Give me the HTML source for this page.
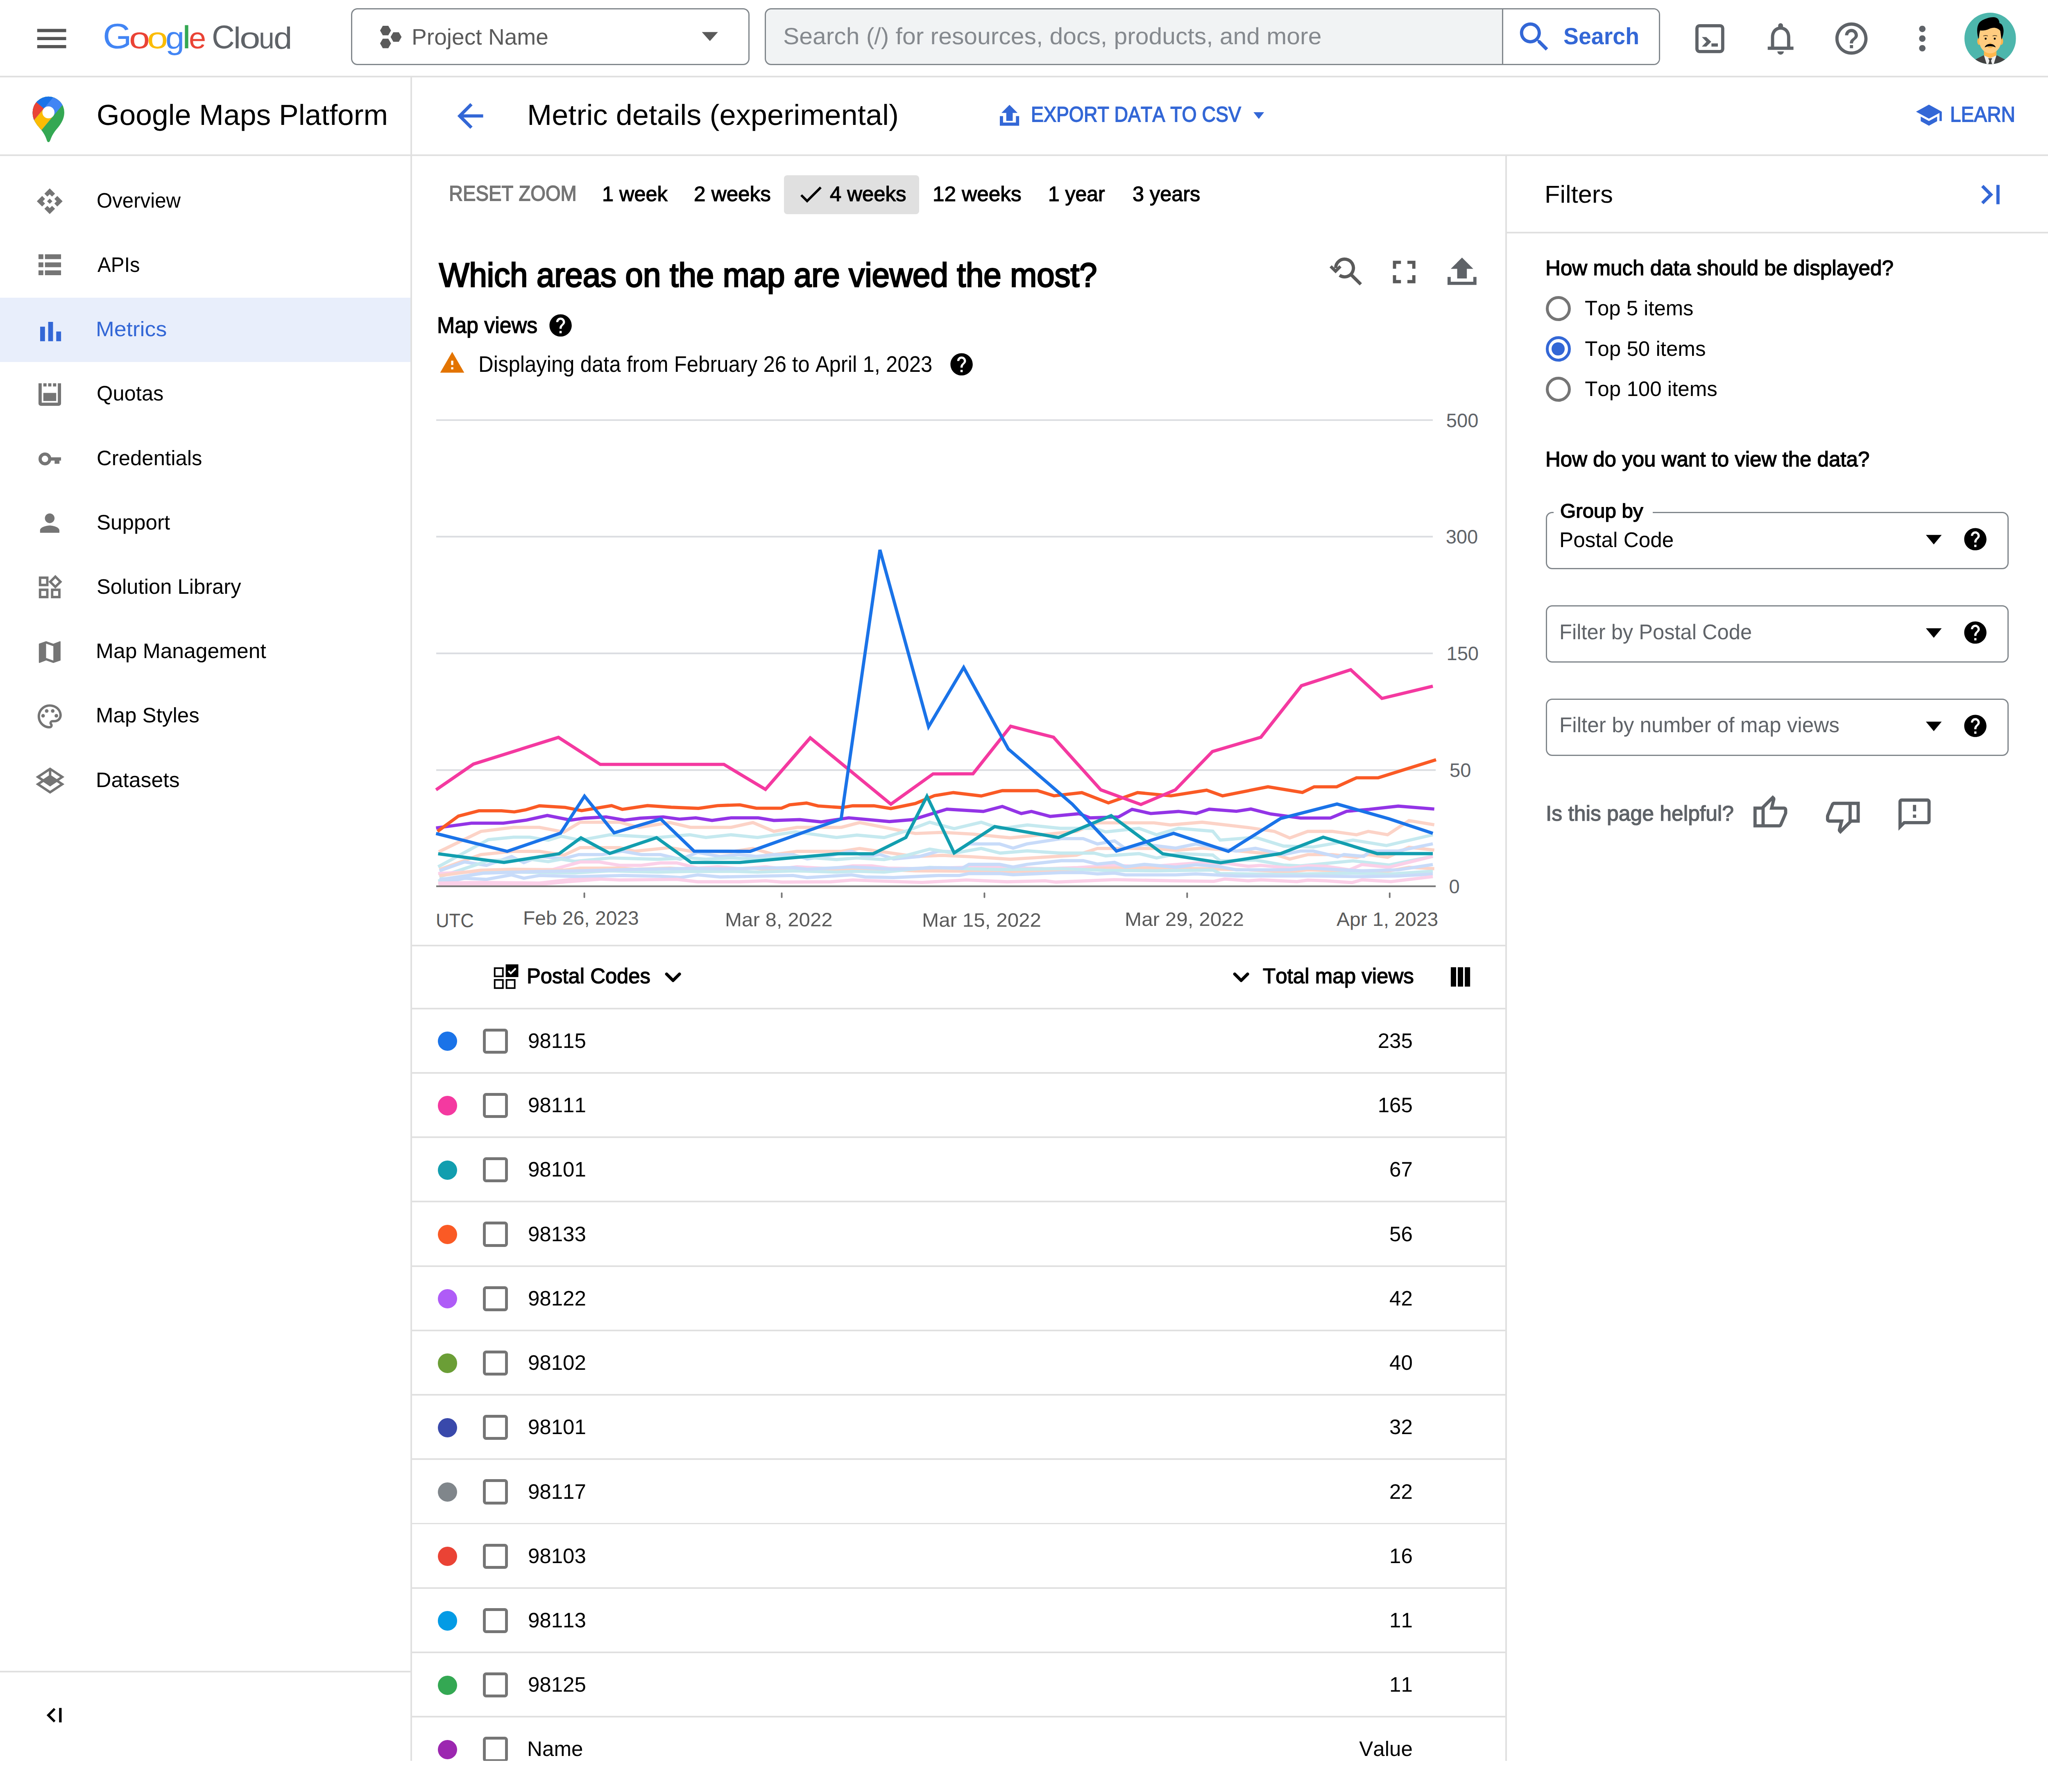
<!DOCTYPE html>
<html lang="en"><head><meta charset="utf-8"><title>Metric details – Google Maps Platform</title>
<style>
html,body{margin:0;padding:0;background:#fff}
body{width:5088px;height:4376px;overflow:hidden}
#app{position:relative;width:1272px;height:1094px;zoom:4;overflow:hidden;background:#fff;font-family:"Liberation Sans",sans-serif;text-rendering:geometricPrecision}
#app div,#app svg,#app span{position:absolute;box-sizing:content-box}
#app svg{overflow:visible}
#app header,#app nav,#app main,#app aside,#app .productbar,#app .logo{position:absolute;left:0;top:0;width:0;height:0}
.t{white-space:nowrap;line-height:1;transform-origin:0 0;font-kerning:none;font-variant-ligatures:none;letter-spacing:0}
</style></head>
<body><div id="app">
<header>
<div style="left:0px;top:47px;width:1272px;height:1px;background:#e0e0e0"></div>
<svg style="left:20px;top:12px;" width="24" height="24" viewBox="0 0 24 24"><path fill="#555" d="M3 18h18v-2H3v2zm0-5h18v-2H3v2zm0-7v2h18V6H3z"/></svg>
<span class="logo"><span class="t" style="left:63.78px;top:11.69px;font-size:21.96px;color:#4285f4;transform:scale(1.0561,1);">G</span><span class="t" style="left:80.26px;top:14.68px;font-size:18.47px;color:#ea4335;transform:scale(1.2659,1);">o</span><span class="t" style="left:91.42px;top:14.68px;font-size:18.47px;color:#fbbc04;transform:scale(1.2659,1);">o</span><span class="t" style="left:102.67px;top:14.35px;font-size:19.46px;color:#4285f4;transform:scale(1.0890,1);">g</span><span class="t" style="left:113.10px;top:13.13px;font-size:19.87px;color:#34a853;transform:scale(1.2082,1);">l</span><span class="t" style="left:117.40px;top:14.68px;font-size:18.47px;color:#ea4335;transform:scale(1.0442,1);">e</span></span>
<span class="logo"><span class="t" style="left:131.57px;top:12.99px;font-size:20.44px;color:#5f6368;transform:scale(0.9649,1);">C</span><span class="t" style="left:145.06px;top:14.22px;font-size:18.7px;color:#5f6368;transform:scale(1.1013,1);">l</span><span class="t" style="left:148.74px;top:14.68px;font-size:18.47px;color:#5f6368;transform:scale(1.2522,1);">o</span><span class="t" style="left:160.70px;top:14.74px;font-size:18.4px;color:#5f6368;transform:scale(0.9416,1);">u</span><span class="t" style="left:169.83px;top:14.18px;font-size:19.06px;color:#5f6368;transform:scale(1.0908,1);">d</span></span>
<div style="left:218px;top:5px;width:246px;height:34px;border:1px solid #80868b;border-radius:4px;"></div>
<svg style="left:234px;top:14px;" width="18" height="18" viewBox="234 14 18 18"><g fill="#5a5a5a"><polygon points="236.01,18.98 237.71,16.03 241.12,16.03 242.83,18.98 241.12,21.93 237.71,21.93"/><polygon points="242.54,22.98 244.24,20.03 247.66,20.03 249.36,22.98 247.66,25.93 244.24,25.93"/><polygon points="236.01,26.99 237.71,24.04 241.12,24.04 242.83,26.99 241.12,29.94 237.71,29.94"/></g></svg>
<span class="t" style="left:255.75px;top:15.95px;font-size:14px;color:#5a5a5a;transform:scale(1.0020,1);">Project Name</span>
<svg style="left:429px;top:10px;" width="24" height="24" viewBox="0 0 24 24"><path fill="#5a5a5a" d="M7 10l5 5.6 5-5.6z"/></svg>
<div style="left:475px;top:5px;width:554.5px;height:34px;border:1px solid #80868b;border-radius:4px;background:#f1f3f4;overflow:hidden;"><div style="left:457px;top:0;width:1px;height:34px;background:#80868b"></div><div style="left:458px;top:0;width:97px;height:34px;background:#fff"></div></div>
<span class="t" style="left:486.52px;top:15.44px;font-size:14.6px;color:#85898e;transform:scale(1.0253,1);">Search (/) for resources, docs, products, and more</span>
<svg style="left:941px;top:11px;" width="24" height="24" viewBox="0 0 24 24"><path fill="#3367d6" d="M15.5 14h-.79l-.28-.27C15.41 12.59 16 11.11 16 9.5 16 5.91 13.09 3 9.5 3S3 5.91 3 9.5 5.91 16 9.5 16c1.61 0 3.09-.59 4.23-1.57l.27.28v.79l5 4.99L20.49 19l-4.99-5zm-6 0C7.01 14 5 11.99 5 9.5S7.01 5 9.5 5 14 7.01 14 9.5 11.99 14 9.5 14z"/></svg>
<span class="t" style="left:970.99px;top:15.44px;font-size:14.6px;color:#3367d6;font-weight:700;transform:scale(0.9668,1);">Search</span>
<svg style="left:1053px;top:15px;" width="18" height="18" viewBox="0 0 18 18"><rect x="1" y="1" width="16" height="16" rx="1.6" fill="none" stroke="#5f6368" stroke-width="2"/><path fill="#5f6368" d="M4.05 8h2.75l3.1 2.95L6.8 13.9H4.05l2.85-2.95zM10 11.95h4v2h-4z"/></svg>
<svg style="left:1094px;top:12px;" width="24" height="24" viewBox="0 0 24 24"><path fill="#5f6368" d="M4 19v-2h2v-6c0-3.07 1.63-5.64 4.5-6.32V4c0-.83.67-1.5 1.5-1.5s1.5.67 1.5 1.5v.68c2.86.68 4.5 3.24 4.5 6.32v6h2v2H4zm4-2h8v-6c0-2.48-1.51-4.5-4-4.500S8 8.520 8 11v6zM12 22c1.100 0 2-.9 2-2h-4c0 1.100.9 2 2 2z"/></svg>
<svg style="left:1138px;top:12px;" width="24" height="24" viewBox="0 0 24 24"><path fill="#5f6368" d="M11 18h2v-2h-2v2zm1-16C6.48 2 2 6.48 2 12s4.48 10 10 10 10-4.48 10-10S17.52 2 12 2zm0 18c-4.41 0-8-3.59-8-8s3.59-8 8-8 8 3.59 8 8-3.59 8-8 8zm0-14c-2.21 0-4 1.79-4 4h2c0-1.1.9-2 2-2s2 .9 2 2c0 2-3 1.75-3 5h2c0-2.25 3-2.5 3-5 0-2.21-1.79-4-4-4z"/></svg>
<svg style="left:1182px;top:12px;" width="24" height="24" viewBox="0 0 24 24"><path fill="#5f6368" d="M12 8c1.1 0 2-.9 2-2s-.9-2-2-2-2 .9-2 2 .9 2 2 2zm0 2c-1.1 0-2 .9-2 2s.9 2 2 2 2-.9 2-2-.9-2-2-2zm0 6c-1.1 0-2 .9-2 2s.9 2 2 2 2-.9 2-2-.9-2-2-2z"/></svg>
<svg style="left:1220px;top:8px;" width="32" height="32" viewBox="0 0 128 128"><defs><clipPath id="avc"><circle cx="64" cy="64" r="64"/></clipPath></defs><g clip-path="url(#avc)"><rect width="128" height="128" fill="#4db6ac"/><path fill="#424242" d="M20 120L47 106h34l27 14v12H20z"/><path fill="#eeeeee" d="M48.5 106L56 130h16l7.5-24z"/><path fill="#424242" d="M59 113.3h10l-3 6 3.4 10.7h-10.8l3.4-10.7z"/><path fill="#ffb74d" d="M48.5 90h31v16l-15.5 7.3-15.5-7.3z"/><ellipse cx="36.5" cy="71" rx="4.7" ry="9" fill="#ffb74d"/><ellipse cx="91.5" cy="71" rx="4.7" ry="9" fill="#ffb74d"/><path fill="#ffcc80" d="M37 30h54v40c0 18-13 31-27 31S37 88 37 70z"/><path fill="#000" d="M35 66c-4-14-5-28 0-38 4-8 14-12 24-15 10-3 22-3 26 5 2 4 2 7 2 8 6 1 9 8 10 16 1 9-2 18-5 25-1-8-2-15-3-22-8-9-18-9-27-5-8 4-16 5-23 4-2 7-3 14-4 22z"/><path d="M47 58q5.5-3 11 0M70 58q5.5-3 11 0" fill="none" stroke="#000" stroke-width="1.3"/><circle cx="52.7" cy="64.6" r="2.5"/><circle cx="75.3" cy="64.6" r="2.5"/><path fill="#ffa726" d="M60 75h8l-4 2.2z"/><path fill="#ffa726" d="M57 85.5h14q-7 4.5-14 0z"/><path fill="#000" d="M50.3 86.300c1.500-5.300 7.500-8.600 13.700-8.600s12.200 3.300 13.700 8.600c-4-2.300-9-2.900-13.700-2.900s-9.700.6-13.700 2.900z"/></g></svg>
</header>
<div class="productbar">
<div style="left:0px;top:96px;width:1272px;height:1px;background:#e0e0e0"></div>
<div style="left:255px;top:48px;width:1px;height:1046px;background:#e0e0e0"></div>
<div style="left:935px;top:97px;width:1px;height:997px;background:#e0e0e0"></div>
<svg style="left:18px;top:58px;" width="24" height="32" viewBox="18 58 24 32"><defs><clipPath id="pinc"><path d="M30.03 59.96A9.84 9.84 0 0 0 20.19 69.8C20.19 71.7 20.6 73.4 21.1 74.47 22.4 77.3 24.2 79 25.63 80.78 27 82.6 28 84.3 28.68 86.15 29.05 87.2 29.3 88.3 30.03 88.3 30.76 88.3 31 87.4 31.21 86.99 31.8 85.3 32.6 83.6 33.94 81.73 35.2 80 36.4 78.8 37.1 77.73 38.6 75.5 39.87 73 39.87 69.8A9.84 9.84 0 0 0 30.03 59.96z"/></clipPath></defs><g clip-path="url(#pinc)"><g transform="translate(30.03 69.8) rotate(-50)"><rect x="-25" y="-25" width="50" height="50" fill="#34a853"/><rect x="-25" y="-25" width="50" height="21.35" fill="#1a73e8"/><rect x="-25" y="-25" width="25" height="21.35" fill="#ea4335"/><rect x="-25" y="-3.75" width="50" height="7.5" fill="#4285f4"/><rect x="-25" y="-3.75" width="25" height="7.5" fill="#fbbc04"/></g></g><circle cx="30.03" cy="69.8" r="3.75" fill="#fff"/></svg>
<span class="t" style="left:59.99px;top:62.66px;font-size:18px;color:#000;transform:scale(1.0103,1);">Google Maps Platform</span>
<svg style="left:280px;top:60px;" width="24" height="24" viewBox="0 0 24 24"><path fill="#3367d6" d="M20 11H7.83l5.59-5.59L12 4l-8 8 8 8 1.41-1.41L7.83 13H20v-2z"/></svg>
<span class="t" style="left:327.39px;top:62.66px;font-size:18px;color:#000;transform:scale(1.0207,1);">Metric details (experimental)</span>
<svg style="left:621px;top:65px;" width="12" height="13" viewBox="0 0 12 13"><path fill="#3367d6" d="M6 0l5 5H8v5H4V5H1zM0 7h2v4h8V7h2v6H0z"/></svg>
<span class="t" style="left:640.43px;top:64.69px;font-size:13.3px;color:#3367d6;-webkit-text-stroke:0.45px #3367d6;transform:scale(0.8875,1);">EXPORT DATA TO CSV</span>
<svg style="left:777px;top:68px;" width="10" height="8" viewBox="0 0 10 8"><path fill="#3367d6" d="M1.6 1.8h6.6l-3.3 4.2z"/></svg>
<svg style="left:1189.4px;top:62.9px;" width="17.45" height="17.45" viewBox="0 0 24 24"><path fill="#3367d6" d="M5 13.18v4L12 21l7-3.82v-4L12 17l-7-3.82zM12 3L1 9l11 6 9-4.91V17h2V9L12 3z"/></svg>
<span class="t" style="left:1211.31px;top:64.69px;font-size:13.3px;color:#3367d6;-webkit-text-stroke:0.45px #3367d6;transform:scale(0.9127,1);">LEARN</span>
</div>
<nav>
<div style="left:0px;top:185px;width:255px;height:40px;background:#e8eefb"></div>
<span class="t" style="left:60.01px;top:117.94px;font-size:13px;color:#000;transform:scale(0.9628,1);">Overview</span>
<span class="t" style="left:60.58px;top:157.94px;font-size:13px;color:#000;transform:scale(0.9607,1);">APIs</span>
<span class="t" style="left:59.48px;top:197.94px;font-size:13px;color:#3367d6;transform:scale(1.0532,1);">Metrics</span>
<span class="t" style="left:59.99px;top:237.94px;font-size:13px;color:#000;transform:scale(0.9920,1);">Quotas</span>
<span class="t" style="left:59.94px;top:277.94px;font-size:13px;color:#000;transform:scale(0.9965,1);">Credentials</span>
<span class="t" style="left:60.01px;top:317.94px;font-size:13px;color:#000;transform:scale(1.0012,1);">Support</span>
<span class="t" style="left:60.01px;top:357.94px;font-size:13px;color:#000;transform:scale(0.9932,1);">Solution Library</span>
<span class="t" style="left:59.52px;top:397.94px;font-size:13px;color:#000;transform:scale(1.0095,1);">Map Management</span>
<span class="t" style="left:59.53px;top:437.94px;font-size:13px;color:#000;">Map Styles</span>
<span class="t" style="left:59.52px;top:477.94px;font-size:13px;color:#000;transform:scale(1.0148,1);">Datasets</span>
<svg style="left:22px;top:116px;" width="18" height="18" viewBox="0 0 18 18"><g fill="#757575" transform="translate(9,9)"><path transform="rotate(0)" d="M0-8L3.3-4.7 1.45-2.9 0-4.3-1.45-2.9-3.3-4.7z"/><path transform="rotate(90)" d="M0-8L3.3-4.7 1.45-2.9 0-4.3-1.45-2.9-3.3-4.7z"/><path transform="rotate(180)" d="M0-8L3.3-4.7 1.45-2.9 0-4.3-1.45-2.9-3.3-4.7z"/><path transform="rotate(270)" d="M0-8L3.3-4.7 1.45-2.9 0-4.3-1.45-2.9-3.3-4.7z"/><path d="M0-1.65L1.65 0 0 1.65-1.65 0z"/></g></svg>
<svg style="left:24px;top:158px;" width="14" height="13" viewBox="0 0 14 13"><path fill="#757575" d="M0 0h3v3H0zM4 0h10v3H4zM0 5h3v3H0zM4 5h10v3H4zM0 10h3v3H0zM4 10h10v3H4z"/></svg>
<svg style="left:25px;top:200px;" width="13" height="12" viewBox="0 0 13 12"><path fill="#3367d6" d="M0 3h3v9H0zM5 0h3v12H5zM10 6h3v6h-3z"/></svg>
<svg style="left:24px;top:238px;" width="14" height="14" viewBox="0 0 14 14"><path fill="#757575" d="M0 0h2v12h10V0h2v12.5a1.5 1.5 0 0 1-1.5 1.5h-11A1.5 1.5 0 0 1 0 12.5zM3 0h2v2H3zM6 0h2v2H6zM9 0h2v2H9zM3 6h8v5H3z"/></svg>
<svg style="left:24px;top:281px;" width="14" height="8" viewBox="0 0 14 8"><path fill="#757575" fill-rule="evenodd" d="M4 0a4 4 0 1 0 0 8 4 4 0 0 0 3.870-3H10v2h3V5h1V3H7.870A4 4 0 0 0 4 0zm0 2a2 2 0 1 1 0 4 2 2 0 0 1 0-4z"/></svg>
<svg style="left:22px;top:316px;" width="18" height="18" viewBox="0 0 24 24"><path fill="#757575" d="M12 12c2.21 0 4-1.79 4-4s-1.79-4-4-4-4 1.79-4 4 1.79 4 4 4zm0 2c-2.67 0-8 1.34-8 4v2h16v-2c0-2.66-5.33-4-8-4z"/></svg>
<svg style="left:22px;top:356px;" width="18" height="18" viewBox="0 0 24 24"><path fill="#757575" d="M16.66 4.52l2.83 2.83-2.83 2.83-2.83-2.83 2.83-2.83M9 5v4H5V5h4m10 10v4h-4v-4h4M9 15v4H5v-4h4m7.66-13.31L11 7.34 16.66 13l5.66-5.66-5.66-5.65zM11 3H3v8h8V3zm10 10h-8v8h8v-8zm-10 0H3v8h8v-8z"/></svg>
<svg style="left:22px;top:396px;" width="18" height="18" viewBox="0 0 24 24"><path fill="#757575" d="M20.5 3l-.16.03L15 5.1 9 3 3.36 4.9c-.21.07-.36.25-.36.48V20.5c0 .28.22.5.5.5l.16-.03L9 18.9l6 2.1 5.64-1.9c.21-.07.36-.25.36-.48V3.5c0-.28-.22-.5-.5-.5zM15 19l-6-2.11V5l6 2.11V19z"/></svg>
<svg style="left:22px;top:436px;" width="18" height="18" viewBox="0 0 24 24"><path fill="#757575" d="M12 22C6.49 22 2 17.51 2 12S6.49 2 12 2s10 4.04 10 9c0 3.31-2.69 6-6 6h-1.77c-.28 0-.5.22-.5.5 0 .12.05.23.13.33.41.47.64 1.06.64 1.67A2.5 2.5 0 0 1 12 22zm0-18c-4.41 0-8 3.59-8 8s3.59 8 8 8c.28 0 .5-.22.5-.5a.54.54 0 0 0-.14-.35c-.41-.46-.63-1.05-.63-1.65a2.5 2.5 0 0 1 2.5-2.5H16c2.21 0 4-1.79 4-4 0-3.86-3.59-7-8-7z"/><g fill="#757575"><circle cx="6.5" cy="11.5" r="1.5"/><circle cx="9.5" cy="7.5" r="1.5"/><circle cx="14.5" cy="7.5" r="1.5"/><circle cx="17.5" cy="11.5" r="1.5"/></g></svg>
<svg style="left:21px;top:475px;" width="20" height="20" viewBox="0 0 20 20"><g fill="none" stroke="#757575" stroke-width="1.5" stroke-linejoin="miter"><path d="M10 2.7l7.55 5-7.55 5-7.55-5z"/><path d="M10 7.2l7.55 5-7.55 5-7.55-5z"/><path d="M10 2.7v5"/></g><path fill="#757575" d="M10 6.6l4.6 3.1-4.6 3.9-4.6-3.9z"/></svg>
<div style="left:0px;top:1038px;width:255px;height:1px;background:#e0e0e0"></div>
<svg style="left:25.25px;top:1056.5px;" width="18" height="18" viewBox="0 0 24 24"><path fill="#000" d="M12.41 16.59L7.82 12l4.59-4.59L11 6l-6 6 6 6zM15.35 6h2.1v12h-2.100z"/></svg>
</nav>
<main>
<div style="left:487px;top:109px;width:84px;height:24px;background:#e0e0e0;border-radius:2px"></div>
<span class="t" style="left:278.82px;top:113.84px;font-size:13.3px;color:#757575;-webkit-text-stroke:0.45px #757575;transform:scale(0.9026,1);">RESET ZOOM</span>
<span class="t" style="left:373.90px;top:113.89px;font-size:13px;color:#000;-webkit-text-stroke:0.35px #000;transform:scale(0.9860,1);">1 week</span>
<span class="t" style="left:430.92px;top:113.89px;font-size:13px;color:#000;-webkit-text-stroke:0.35px #000;transform:scale(1.0018,1);">2 weeks</span>
<span class="t" style="left:515.38px;top:113.89px;font-size:13px;color:#000;-webkit-text-stroke:0.35px #000;transform:scale(0.9942,1);">4 weeks</span>
<span class="t" style="left:579.28px;top:113.89px;font-size:13px;color:#000;-webkit-text-stroke:0.35px #000;transform:scale(1.0035,1);">12 weeks</span>
<span class="t" style="left:650.90px;top:113.89px;font-size:13px;color:#000;-webkit-text-stroke:0.35px #000;transform:scale(0.9752,1);">1 year</span>
<span class="t" style="left:703.38px;top:113.89px;font-size:13px;color:#000;-webkit-text-stroke:0.35px #000;transform:scale(0.9853,1);">3 years</span>
<svg style="left:494.46px;top:111.8px;" width="18" height="18" viewBox="0 0 24 24"><path fill="#000" d="M9 16.17L4.83 12l-1.42 1.41L9 19 21 7l-1.41-1.41z"/></svg>
<!-- chart header -->
<span class="t" style="left:272.69px;top:160.42px;font-size:21.0px;color:#000;-webkit-text-stroke:0.8px #000;transform:scale(0.9439,1);">Which areas on the map are viewed the most?</span>
<span class="t" style="left:271.51px;top:195.05px;font-size:14px;color:#000;-webkit-text-stroke:0.4px #000;transform:scale(0.9433,1);">Map views</span>
<svg style="left:339.9px;top:193.9px;" width="16.6" height="16.6" viewBox="0 0 24 24"><path fill="#000" d="M12 2C6.48 2 2 6.48 2 12s4.48 10 10 10 10-4.48 10-10S17.52 2 12 2zm1 17h-2v-2h2v2zm2.07-7.75l-.9.92C13.45 12.9 13 13.5 13 15h-2v-.5c0-1.1.45-2.1 1.17-2.83l1.24-1.26c.37-.36.59-.86.59-1.41 0-1.1-.9-2-2-2s-2 .9-2 2H8c0-2.21 1.79-4 4-4s4 1.79 4 4c0 .88-.36 1.68-.93 2.25z"/></svg>
<svg style="left:272.8px;top:217.2px;" width="16.3" height="16.3" viewBox="0 0 24 24"><path fill="#e37400" d="M1 21h22L12 2 1 21zm12-3h-2v-2h2v2zm0-4h-2v-4h2v4z"/></svg>
<span class="t" style="left:297.14px;top:219.35px;font-size:14px;color:#000;transform:scale(0.9245,1);">Displaying data from February 26 to April 1, 2023</span>
<svg style="left:588.9px;top:217.9px;" width="16.6" height="16.6" viewBox="0 0 24 24"><path fill="#000" d="M12 2C6.48 2 2 6.48 2 12s4.48 10 10 10 10-4.48 10-10S17.52 2 12 2zm1 17h-2v-2h2v2zm2.07-7.75l-.9.92C13.45 12.9 13 13.5 13 15h-2v-.5c0-1.1.45-2.1 1.17-2.83l1.24-1.26c.37-.36.59-.86.59-1.41 0-1.1-.9-2-2-2s-2 .9-2 2H8c0-2.21 1.79-4 4-4s4 1.79 4 4c0 .88-.36 1.68-.93 2.25z"/></svg>
<svg style="left:824px;top:158px;" width="24" height="22" viewBox="824 158 24 22"><g fill="none" stroke="#5a5a5a" stroke-width="2"><path d="M829.6 166.6A5.5 5.5 0 1 1 832.0 171.05"/><path d="M839.2 170.7l6.0 5.95"/><path d="M826.45 165.45l3.07 3.05 3.0-3.05" stroke-width="1.9"/></g></svg>
<svg style="left:860px;top:157px;" width="24" height="24" viewBox="0 0 24 24"><path fill="#5a5a5a" d="M7 14H5v5h5v-2H7v-3zm-2-4h2V7h3V5H5v5zm12 7h-3v2h5v-5h-2v3zM14 5v2h3v3h2V5h-5z"/></svg>
<svg style="left:899px;top:160px;" width="18" height="17" viewBox="0 0 18 17"><path fill="#5f6368" d="M9 0l7 7h-4v6H6V7H2zM0 12h2v3h14v-3h2v5H0z"/></svg>
<!-- chart -->
<svg style="left:256px;top:245px" width="680" height="345" viewBox="256 245 680 345"><g stroke="#dadce0" stroke-width="1"><line x1="271" y1="261" x2="890" y2="261"/><line x1="271" y1="333.4" x2="890" y2="333.4"/><line x1="271" y1="405.9" x2="890" y2="405.9"/><line x1="271" y1="478.4" x2="891.8" y2="478.4"/></g><g fill="none" stroke-linejoin="miter" stroke-linecap="butt"><polyline points="272.6,529.2 298.8,516.5 319.0,514.0 335.1,514.0 350.3,516.9 360.4,510.8 384.9,510.8 396.8,514.0 416.2,511.0 428.9,514.0 454.1,514.0 467.7,511.0 480.7,516.5 495.1,514.0 522.6,514.0 534.0,511.0 568.6,517.8 585.5,517.1 604.4,518.2 627.7,520.5 668.6,516.5 681.7,511.2 716.8,511.2 726.9,512.5 746.7,510.8 775.3,514.1 791.6,516.5 801.1,520.6 812.3,516.5 827.5,516.5 842.6,518.6 849.9,516.5 861.9,518.6 875.2,509.8 890.9,512.4" stroke="#fcd3c7" stroke-width="2"/><polyline points="272.2,538.5 303.4,521.6 319.0,520.1 329.2,520.1 340.6,522.0 348.6,519.5 360.4,522.0 379.0,518.6 408.6,520.3 428.4,518.6 438.5,520.3 454.1,518.6 470.6,520.3 494.3,516.8 519.6,520.3 532.3,518.8 549.2,520.3 563.5,516.1 577.5,510.8 592.7,514.8 609.5,510.8 621.3,514.8 638.2,512.5 658.5,514.6 679.6,514.6 686.8,516.8 707.5,514.6 718.4,518.6 732.0,514.6 753.3,516.4 757.9,521.9 779.8,520.2 797.2,525.6 815.7,526.2 840.4,521.9 861.2,525.3 890.0,518.6" stroke="#c5e9ef" stroke-width="2"/><polyline points="273.0,540.2 298.8,530.9 319.0,528.9 335.1,528.9 350.3,531.3 360.4,526.6 384.9,526.6 394.2,528.8 416.2,526.6 428.9,528.8 454.1,529.2 467.7,527.1 480.7,530.9 495.1,528.9 522.6,528.9 534.0,527.1 568.6,532.1 585.5,531.4 604.4,532.3 627.7,533.8 668.6,531.3 681.7,527.1 716.8,527.1 730.3,528.3 746.7,526.9 775.3,529.2 791.6,530.7 801.1,533.7 812.3,530.9 827.5,530.9 842.6,532.6 849.9,530.9 861.9,532.6 875.2,526.4 890.9,528.1" stroke="#fcd3c7" stroke-width="2"/><polyline points="273.0,541.0 288.6,535.5 302.2,537.6 317.8,532.1 325.4,535.9 335.1,532.1 350.3,533.4 359.6,530.9 374.0,530.9 386.6,528.8 398.4,530.9 410.3,530.9 422.5,533.8 433.4,529.6 447.4,532.1 458.8,530.9 469.8,532.1 480.7,530.9 492.6,530.9 501.4,533.6 517.1,531.3 528.9,528.8 537.3,532.1 546.6,530.9 555.1,533.6 571.1,532.1 582.9,528.8 593.4,529.2 601.9,524.3 620.9,524.3 629.3,526.9 637.8,524.3 659.3,521.0 672.8,521.0 681.7,524.3 692.3,522.4 699.0,527.1 710.8,524.5 730.3,526.9 742.9,524.3 768.0,528.7 779.8,527.0 797.2,530.9 807.8,528.7 815.7,528.7 830.9,532.3 834.8,530.9 847.1,532.0 851.1,528.7 868.5,528.7 890.0,524.2" stroke="#c8dbf9" stroke-width="2"/><polyline points="273.0,544.8 303.4,534.7 329.2,533.8 340.6,535.3 348.6,533.8 357.1,535.1 379.0,533.0 408.6,533.8 428.4,533.0 438.5,533.8 454.1,533.0 470.6,533.8 494.3,532.1 519.6,534.0 532.3,533.0 549.2,534.0 563.5,531.3 577.5,527.5 592.7,530.0 609.5,527.1 621.3,530.0 638.2,528.6 658.5,530.0 679.6,530.0 686.8,531.7 707.5,530.3 718.4,533.0 732.0,530.3 753.3,531.2 757.9,534.8 779.8,534.3 797.2,537.4 807.8,537.9 840.4,534.8 862.8,537.4 890.0,532.0" stroke="#c5e9ef" stroke-width="2"/><polyline points="272.2,542.7 319.0,540.2 343.5,540.2 360.4,535.5 372.3,535.5 384.9,537.6 398.4,537.6 410.3,536.1 420.4,536.1 433.4,539.3 446.1,538.5 459.6,539.7 475.7,538.5 485.8,539.7 495.1,538.5 516.2,539.7 529.7,537.9 541.6,537.9 551.7,539.3 572.8,539.7 610.3,538.5 649.2,539.7 669.5,539.0 692.3,537.6 711.7,538.5 745.0,536.0 763.0,536.5 775.3,538.2 783.2,537.6 801.1,539.3 812.3,537.9 823.6,538.2 838.2,540.4 846.0,537.1 862.8,538.8 890.0,532.0" stroke="#fbd0e8" stroke-width="2"/><polyline points="273.0,544.0 298.8,540.6 319.0,540.0 350.3,540.6 360.4,539.3 384.9,539.3 394.2,540.0 416.2,539.3 428.9,540.2 454.1,540.2 467.7,539.3 480.7,540.6 522.6,540.2 534.0,539.6 568.6,541.0 627.7,541.4 668.6,540.6 681.7,539.3 716.8,539.3 746.7,539.7 775.3,540.4 801.1,541.6 812.3,540.4 842.6,541.2 861.9,541.2 875.2,538.8 890.9,539.7" stroke="#fcd3c7" stroke-width="2"/><polyline points="272.2,547.3 300.5,542.3 319.0,541.8 357.1,542.3 379.0,541.0 408.6,541.8 428.4,541.4 454.1,541.3 470.6,541.8 494.3,541.0 519.6,541.8 532.3,541.3 549.2,541.8 577.5,538.9 600.0,539.7 621.3,540.2 658.5,539.7 686.8,540.7 718.4,541.0 753.3,540.5 757.9,542.7 797.2,543.2 840.4,542.4 862.8,543.0 890.0,541.2" stroke="#c5e9ef" stroke-width="2"/><polyline points="273.0,549.0 288.6,545.6 302.2,546.3 317.8,543.5 325.4,545.6 335.1,543.9 359.6,544.6 386.6,543.9 410.3,544.4 422.5,545.2 433.4,543.5 447.4,544.8 492.6,543.9 501.4,545.2 528.9,543.5 537.3,544.8 555.1,545.2 582.9,543.9 596.0,543.9 601.9,542.7 620.9,542.7 629.3,543.4 659.3,542.1 672.8,542.1 681.7,542.9 692.3,542.4 699.0,543.5 730.3,543.5 742.9,542.9 768.0,544.2 815.7,544.2 847.1,544.6 868.5,544.2 890.0,543.0" stroke="#c8dbf9" stroke-width="2"/><polyline points="273.0,546.5 300.0,542.5 330.0,541.5 360.0,541.0 400.0,540.0 430.0,539.5 447.4,539.8 492.6,539.0 501.4,540.0 528.9,538.6 555.1,540.0 582.9,539.0 597.7,539.3 601.9,537.0 620.9,537.0 629.3,538.7 637.8,537.0 659.3,534.7 672.8,534.7 681.7,536.8 692.3,535.7 699.0,538.5 710.8,537.0 730.3,538.7 742.9,537.2 756.2,538.2 768.0,540.4 801.1,540.4 812.3,539.3 846.0,541.0 868.5,540.4 890.0,537.1" stroke="#c8dbf9" stroke-width="2"/><polyline points="272.2,548.6 298.8,548.2 335.1,548.6 353.7,546.5 372.3,546.1 384.9,546.7 420.4,546.3 433.4,547.8 459.6,547.8 475.7,547.2 485.8,548.0 516.2,547.8 529.7,546.7 551.7,547.5 572.8,548.2 600.2,546.7 625.5,547.8 649.2,547.2 655.9,548.0 692.3,546.5 728.6,547.2 754.0,547.5 760.7,546.1 775.3,547.2 783.2,546.6 805.6,547.7 812.3,546.8 823.6,547.2 839.8,548.3 846.0,546.6 864.0,547.7 890.0,544.6" stroke="#fbd0e8" stroke-width="2"/><polyline points="272.5,549.7 300.0,549.6 335.0,549.5 354.0,547.6 372.3,546.2" stroke="#fbd0e8" stroke-width="2"/><polyline points="270.9,514.4 292.9,511.4 312.7,511.4 327.1,509.5 340.0,506.6 354.5,509.5 363.0,508.3 376.5,507.5 387.9,509.5 397.6,508.3 412.0,507.5 422.1,508.9 432.2,508.1 442.3,509.7 454.1,508.1 471.0,508.1 480.7,509.7 496.8,509.2 509.9,510.6 527.2,508.1 552.5,510.4 566.9,509.2 588.2,502.7 610.8,504.1 622.6,501.0 634.4,505.4 640.7,504.1 652.3,507.2 670.3,505.5 677.1,508.1 694.8,507.5 703.2,502.8 714.8,505.4 732.0,504.1 743.1,505.4 751.1,502.7 768.0,504.0 777.0,502.6 789.3,505.7 807.8,508.2 826.4,508.2 836.5,504.0 850.5,502.8 868.5,500.8 890.9,502.6" stroke="#9334e6" stroke-width="2"/><polyline points="271.8,516.5 284.8,507.0 297.5,503.7 311.5,503.7 319.5,504.4 326.7,503.1 335.1,500.6 351.1,501.6 361.3,503.6 379.9,500.5 386.6,502.8 402.2,500.5 417.0,501.5 433.9,502.2 445.7,500.5 459.6,500.0 469.8,502.1 485.4,502.1 490.5,500.0 501.0,498.9 508.2,500.7 523.0,501.7 529.7,500.6 542.8,500.6 553.4,502.3 568.6,499.2 580.4,494.3 592.2,492.4 609.5,494.5 622.6,491.2 644.5,491.2 654.7,494.4 672.0,492.4 688.5,498.8 706.6,492.4 727.3,494.4 749.5,490.9 759.4,494.4 787.6,488.8 809.0,492.3 816.3,488.8 830.3,488.8 842.6,483.2 856.1,483.2 892.0,472.0" stroke="#fa5a25" stroke-width="2"/><polyline points="272.2,530.4 313.1,535.8 347.3,530.4 360.9,520.5 378.8,530.2 407.9,520.4 429.3,535.8 459.6,535.8 520.4,530.4 542.4,530.4 562.7,520.3 575.8,494.7 592.7,529.9 617.9,513.5 657.5,520.3 690.2,506.7 722.2,530.4 758.2,536.0 795.5,530.3 821.9,520.1 855.5,530.3 890.0,530.3" stroke="#129eaf" stroke-width="2"/><polyline points="270.9,490.7 294.1,474.7 346.9,458.1 372.9,474.9 449.7,474.9 475.5,490.4 503.3,458.4 553.4,499.6 579.6,480.8 604.4,480.7 627.8,451.2 654.4,458.0 683.8,490.7 708.7,499.8 730.1,490.7 753.1,466.9 783.2,458.0 808.4,426.0 839.0,416.1 858.4,433.9 890.0,426.3" stroke="#f439a0" stroke-width="2"/><polyline points="270.9,517.8 315.1,528.9 348.2,517.6 363.1,494.6 381.5,517.4 410.4,508.8 431.2,528.8 466.0,528.9 522.5,508.8 546.6,341.6 576.8,451.5 598.6,414.7 626.4,465.4 666.1,499.6 693.5,528.7 729.0,517.7 763.0,528.9 795.5,508.5 830.5,499.5 862.8,508.7 890.0,517.7" stroke="#1a73e8" stroke-width="2"/></g><line x1="271" y1="550.6" x2="891.8" y2="550.6" stroke="#757575" stroke-width="1"/><g stroke="#757575" stroke-width="1" stroke-linecap="round"><line x1="363.0" y1="554.9" x2="363.0" y2="557.4"/><line x1="485.6" y1="554.9" x2="485.6" y2="557.4"/><line x1="611.5" y1="554.9" x2="611.5" y2="557.4"/><line x1="737.4" y1="554.9" x2="737.4" y2="557.4"/><line x1="863.2" y1="554.9" x2="863.2" y2="557.4"/></g></svg>
<span class="t" style="left:898.22px;top:255.09px;font-size:12px;color:#5f6368;">500</span>
<span class="t" style="left:897.94px;top:327.49px;font-size:12px;color:#5f6368;">300</span>
<span class="t" style="left:898.39px;top:399.99px;font-size:12px;color:#5f6368;">150</span>
<span class="t" style="left:900.32px;top:472.49px;font-size:12px;color:#5f6368;">50</span>
<span class="t" style="left:899.93px;top:544.69px;font-size:12px;color:#5f6368;">0</span>
<span class="t" style="left:270.61px;top:565.74px;font-size:12px;color:#5a5a5a;transform:scale(0.9579,1);">UTC</span>
<span class="t" style="left:324.90px;top:564.34px;font-size:12px;color:#5a5a5a;transform:scale(1.0172,1);">Feb 26, 2023</span>
<span class="t" style="left:450.27px;top:565.24px;font-size:12px;color:#5a5a5a;transform:scale(1.0440,1);">Mar 8, 2022</span>
<span class="t" style="left:572.77px;top:565.54px;font-size:12px;color:#5a5a5a;transform:scale(1.0474,1);">Mar 15, 2022</span>
<span class="t" style="left:698.57px;top:565.14px;font-size:12px;color:#5a5a5a;transform:scale(1.0474,1);">Mar 29, 2022</span>
<span class="t" style="left:829.98px;top:565.14px;font-size:12px;color:#5a5a5a;transform:scale(1.0180,1);">Apr 1, 2023</span>
<!-- table -->
<div style="left:256px;top:587px;width:679px;height:1px;background:#e0e0e0"></div>
<div style="left:256px;top:626px;width:679px;height:1px;background:#e0e0e0"></div>
<div style="left:256px;top:666px;width:679px;height:1px;background:#e0e0e0"></div>
<div style="left:256px;top:706px;width:679px;height:1px;background:#e0e0e0"></div>
<div style="left:256px;top:746px;width:679px;height:1px;background:#e0e0e0"></div>
<div style="left:256px;top:786px;width:679px;height:1px;background:#e0e0e0"></div>
<div style="left:256px;top:826px;width:679px;height:1px;background:#e0e0e0"></div>
<div style="left:256px;top:866px;width:679px;height:1px;background:#e0e0e0"></div>
<div style="left:256px;top:906px;width:679px;height:1px;background:#e0e0e0"></div>
<div style="left:256px;top:946px;width:679px;height:1px;background:#e0e0e0"></div>
<div style="left:256px;top:986px;width:679px;height:1px;background:#e0e0e0"></div>
<div style="left:256px;top:1026px;width:679px;height:1px;background:#e0e0e0"></div>
<div style="left:256px;top:1066px;width:679px;height:1px;background:#e0e0e0"></div>
<svg style="left:306px;top:598px;" width="17" height="17" viewBox="0 0 17 17"><g fill="none" stroke="#000" stroke-width="1"><rect x="1.2" y="3.35" width="5.1" height="5.1"/><rect x="1.2" y="10.65" width="5.1" height="5.1"/><rect x="8.55" y="10.65" width="5.1" height="5.1"/></g><rect x="8.05" y="1.0" width="7.85" height="7.9" fill="#000"/><path d="M9.7 5.1l1.5 1.5 3.1-3.1" fill="none" stroke="#fff" stroke-width="1.1"/></svg>
<span class="t" style="left:327.04px;top:599.77px;font-size:13.2px;color:#000;-webkit-text-stroke:0.4px #000;transform:scale(0.9787,1);">Postal Codes</span>
<svg style="left:406px;top:595px;" width="24" height="24" viewBox="0 0 24 24"><path fill="none" stroke="#000" stroke-width="1.9" stroke-linecap="round" stroke-linejoin="round" d="M8 10.1l4 4 4-4"/></svg>
<svg style="left:759px;top:595px;" width="24" height="24" viewBox="0 0 24 24"><path fill="none" stroke="#000" stroke-width="1.9" stroke-linecap="round" stroke-linejoin="round" d="M8 10.1l4 4 4-4"/></svg>
<span class="t" style="left:784.31px;top:599.82px;font-size:13.2px;color:#000;-webkit-text-stroke:0.4px #000;transform:scale(0.9843,1);">Total map views</span>
<svg style="left:901px;top:601px;" width="12" height="12" viewBox="0 0 12 12"><path fill="#000" d="M0 0h3.3v12H0zM4.35 0h3.3v12h-3.3zM8.7 0h3.3v12H8.7z"/></svg>
<div style="left:272px;top:640.9px;width:12px;height:12px;background:#1a73e8;border-radius:50%"></div>
<div style="left:300px;top:639.0px;width:12px;height:12px;border:2px solid #757575;border-radius:2px"></div>
<span class="t" style="left:327.89px;top:640.04px;font-size:13px;color:#000;">98115</span>
<span class="t" style="left:855.71px;top:640.04px;font-size:13px;color:#000;">235</span>
<div style="left:272px;top:680.9px;width:12px;height:12px;background:#f439a0;border-radius:50%"></div>
<div style="left:300px;top:679.0px;width:12px;height:12px;border:2px solid #757575;border-radius:2px"></div>
<span class="t" style="left:327.89px;top:680.04px;font-size:13px;color:#000;">98111</span>
<span class="t" style="left:855.71px;top:680.04px;font-size:13px;color:#000;">165</span>
<div style="left:272px;top:720.9px;width:12px;height:12px;background:#129eaf;border-radius:50%"></div>
<div style="left:300px;top:719.0px;width:12px;height:12px;border:2px solid #757575;border-radius:2px"></div>
<span class="t" style="left:327.89px;top:720.04px;font-size:13px;color:#000;">98101</span>
<span class="t" style="left:862.94px;top:720.04px;font-size:13px;color:#000;">67</span>
<div style="left:272px;top:760.9px;width:12px;height:12px;background:#fa5a25;border-radius:50%"></div>
<div style="left:300px;top:759.0px;width:12px;height:12px;border:2px solid #757575;border-radius:2px"></div>
<span class="t" style="left:327.89px;top:760.04px;font-size:13px;color:#000;">98133</span>
<span class="t" style="left:862.94px;top:760.04px;font-size:13px;color:#000;">56</span>
<div style="left:272px;top:800.9px;width:12px;height:12px;background:#af5cf7;border-radius:50%"></div>
<div style="left:300px;top:799.0px;width:12px;height:12px;border:2px solid #757575;border-radius:2px"></div>
<span class="t" style="left:327.89px;top:800.04px;font-size:13px;color:#000;">98122</span>
<span class="t" style="left:862.94px;top:800.04px;font-size:13px;color:#000;">42</span>
<div style="left:272px;top:840.9px;width:12px;height:12px;background:#6b9e36;border-radius:50%"></div>
<div style="left:300px;top:839.0px;width:12px;height:12px;border:2px solid #757575;border-radius:2px"></div>
<span class="t" style="left:327.89px;top:840.04px;font-size:13px;color:#000;">98102</span>
<span class="t" style="left:862.94px;top:840.04px;font-size:13px;color:#000;">40</span>
<div style="left:272px;top:880.9px;width:12px;height:12px;background:#3949ab;border-radius:50%"></div>
<div style="left:300px;top:879.0px;width:12px;height:12px;border:2px solid #757575;border-radius:2px"></div>
<span class="t" style="left:327.89px;top:880.04px;font-size:13px;color:#000;">98101</span>
<span class="t" style="left:862.94px;top:880.04px;font-size:13px;color:#000;">32</span>
<div style="left:272px;top:920.9px;width:12px;height:12px;background:#80868b;border-radius:50%"></div>
<div style="left:300px;top:919.0px;width:12px;height:12px;border:2px solid #757575;border-radius:2px"></div>
<span class="t" style="left:327.89px;top:920.04px;font-size:13px;color:#000;">98117</span>
<span class="t" style="left:862.94px;top:920.04px;font-size:13px;color:#000;">22</span>
<div style="left:272px;top:960.9px;width:12px;height:12px;background:#ea4335;border-radius:50%"></div>
<div style="left:300px;top:959.0px;width:12px;height:12px;border:2px solid #757575;border-radius:2px"></div>
<span class="t" style="left:327.89px;top:960.04px;font-size:13px;color:#000;">98103</span>
<span class="t" style="left:862.94px;top:960.04px;font-size:13px;color:#000;">16</span>
<div style="left:272px;top:1000.9px;width:12px;height:12px;background:#039be5;border-radius:50%"></div>
<div style="left:300px;top:999.0px;width:12px;height:12px;border:2px solid #757575;border-radius:2px"></div>
<span class="t" style="left:327.89px;top:1000.04px;font-size:13px;color:#000;">98113</span>
<span class="t" style="left:862.94px;top:1000.04px;font-size:13px;color:#000;">11</span>
<div style="left:272px;top:1040.9px;width:12px;height:12px;background:#34a853;border-radius:50%"></div>
<div style="left:300px;top:1039.0px;width:12px;height:12px;border:2px solid #757575;border-radius:2px"></div>
<span class="t" style="left:327.89px;top:1040.04px;font-size:13px;color:#000;">98125</span>
<span class="t" style="left:862.94px;top:1040.04px;font-size:13px;color:#000;">11</span>
<div style="left:272px;top:1080.9px;width:12px;height:12px;background:#9c27b0;border-radius:50%"></div>
<div style="left:300px;top:1079.0px;width:12px;height:12px;border:2px solid #757575;border-radius:2px"></div>
<span class="t" style="left:327.43px;top:1080.04px;font-size:13px;color:#000;">Name</span>
<span class="t" style="left:844.15px;top:1080.04px;font-size:13px;color:#000;">Value</span>
</main>
<aside>
<div style="left:936px;top:144px;width:336px;height:1px;background:#e0e0e0"></div>
<span class="t" style="left:959.32px;top:113.33px;font-size:15.2px;color:#000;transform:scale(1.0257,1);">Filters</span>
<svg style="left:1225px;top:109px;" width="24" height="24" viewBox="0 0 24 24"><path fill="#3367d6" d="M5.59 7.41L10.18 12l-4.59 4.59L7 18l6-6-6-6zM15 6h2v12h-2z"/></svg>
<span class="t" style="left:959.73px;top:160.02px;font-size:13.2px;color:#000;-webkit-text-stroke:0.4px #000;transform:scale(0.9856,1);">How much data should be displayed?</span>
<div style="left:960px;top:183.9px;width:12px;height:12px;border:2px solid #757575;border-radius:50%"></div>
<span class="t" style="left:984.31px;top:184.99px;font-size:13px;color:#000;transform:scale(0.9948,1);">Top 5 items</span>
<div style="left:960px;top:208.95px;width:12px;height:12px;border:2px solid #3367d6;border-radius:50%"><div style="left:2px;top:2px;width:8px;height:8px;border-radius:50%;background:#3367d6"></div></div>
<span class="t" style="left:984.31px;top:210.04px;font-size:13px;color:#000;">Top 50 items</span>
<div style="left:960px;top:233.95px;width:12px;height:12px;border:2px solid #757575;border-radius:50%"></div>
<span class="t" style="left:984.31px;top:235.04px;font-size:13px;color:#000;">Top 100 items</span>
<span class="t" style="left:959.73px;top:278.92px;font-size:13.2px;color:#000;-webkit-text-stroke:0.4px #000;transform:scale(0.9835,1);">How do you want to view the data?</span>
<div style="left:960px;top:318px;width:286px;height:34px;border:1px solid #80868b;border-radius:4px"></div>
<svg style="left:1189px;top:324px;" width="24" height="24" viewBox="0 0 24 24"><path fill="#000" d="M7.1 8.2h9.8L12 14.1z"/></svg>
<svg style="left:1218.7px;top:326.7px;" width="16.6" height="16.6" viewBox="0 0 24 24"><path fill="#000" d="M12 2C6.48 2 2 6.48 2 12s4.48 10 10 10 10-4.48 10-10S17.52 2 12 2zm1 17h-2v-2h2v2zm2.07-7.75l-.9.92C13.45 12.9 13 13.5 13 15h-2v-.5c0-1.1.45-2.1 1.17-2.83l1.24-1.26c.37-.36.59-.86.59-1.41 0-1.1-.9-2-2-2s-2 .9-2 2H8c0-2.21 1.79-4 4-4s4 1.79 4 4c0 .88-.36 1.68-.93 2.25z"/></svg>
<div style="left:960px;top:376px;width:286px;height:34px;border:1px solid #80868b;border-radius:4px"></div>
<svg style="left:1189px;top:382px;" width="24" height="24" viewBox="0 0 24 24"><path fill="#000" d="M7.1 8.2h9.8L12 14.1z"/></svg>
<svg style="left:1218.7px;top:384.7px;" width="16.6" height="16.6" viewBox="0 0 24 24"><path fill="#000" d="M12 2C6.48 2 2 6.48 2 12s4.48 10 10 10 10-4.48 10-10S17.52 2 12 2zm1 17h-2v-2h2v2zm2.07-7.75l-.9.92C13.45 12.9 13 13.5 13 15h-2v-.5c0-1.1.45-2.1 1.17-2.83l1.24-1.26c.37-.36.59-.86.59-1.41 0-1.1-.9-2-2-2s-2 .9-2 2H8c0-2.21 1.79-4 4-4s4 1.79 4 4c0 .88-.36 1.68-.93 2.25z"/></svg>
<div style="left:960px;top:434px;width:286px;height:34px;border:1px solid #80868b;border-radius:4px"></div>
<svg style="left:1189px;top:440px;" width="24" height="24" viewBox="0 0 24 24"><path fill="#000" d="M7.1 8.2h9.8L12 14.1z"/></svg>
<svg style="left:1218.7px;top:442.7px;" width="16.6" height="16.6" viewBox="0 0 24 24"><path fill="#000" d="M12 2C6.48 2 2 6.48 2 12s4.48 10 10 10 10-4.48 10-10S17.52 2 12 2zm1 17h-2v-2h2v2zm2.07-7.75l-.9.92C13.45 12.9 13 13.5 13 15h-2v-.5c0-1.1.45-2.1 1.17-2.83l1.24-1.26c.37-.36.59-.86.59-1.41 0-1.1-.9-2-2-2s-2 .9-2 2H8c0-2.21 1.79-4 4-4s4 1.79 4 4c0 .88-.36 1.68-.93 2.25z"/></svg>
<div style="left:965px;top:316px;width:61.5px;height:5px;background:#fff"></div>
<span class="t" style="left:969.08px;top:311.57px;font-size:12.2px;color:#000;-webkit-text-stroke:0.4px #000;transform:scale(1.0271,1);">Group by</span>
<span class="t" style="left:968.43px;top:328.82px;font-size:13.2px;color:#000;transform:scale(0.9880,1);">Postal Code</span>
<span class="t" style="left:968.44px;top:386.12px;font-size:13.2px;color:#5f6368;transform:scale(0.9764,1);">Filter by Postal Code</span>
<span class="t" style="left:968.43px;top:444.02px;font-size:13.2px;color:#5f6368;transform:scale(0.9885,1);">Filter by number of map views</span>
<span class="t" style="left:960.09px;top:498.92px;font-size:13.2px;color:#5f6368;-webkit-text-stroke:0.4px #5f6368;transform:scale(0.9948,1);">Is this page helpful?</span>
<svg style="left:1087px;top:493px;" width="24" height="24" viewBox="0 0 24 24"><path fill="#5f6368" d="M18 21H7V8l7-7 1.25 1.25q.175.175.288.475.112.3.112.575v.35L14.55 8H21q.8 0 1.4.6.6.6.6 1.4v2q0 .175-.05.375t-.1.375l-3 7.05q-.225.5-.75.85T18 21Zm-9-2h9l3-7v-2h-9l1.35-5.5L9 8.85ZM9 8.85V19ZM7 8v2H4v9h3v2H2V8Z"/></svg>
<svg style="left:1133px;top:495px;" width="24" height="24" viewBox="0 0 24 24"><path fill="#5f6368" d="M6 3h11v13l-7 7-1.25-1.25q-.175-.175-.287-.475Q8.35 20.975 8.35 20.7v-.35L9.45 16H3q-.8 0-1.4-.6Q1 14.8 1 14v-2q0-.175.05-.375t.1-.375l3-7.05q.225-.5.75-.85T6 3Zm9 2H6l-3 7v2h9l-1.35 5.5L15 15.15Zm0 10.15V5Zm2 .85v-2h3V5h-3V3h5v13Z"/></svg>
<svg style="left:1177px;top:494px;" width="24" height="24" viewBox="0 0 24 24"><path fill="#5f6368" d="M4 2h16a2 2 0 0 1 2 2v12a2 2 0 0 1-2 2H6l-4 4V4a2 2 0 0 1 2-2zm0 2v13.2L5.2 16H20V4zM11 6h2v4h-2zM11 12h2v2h-2z"/></svg>
</aside>
</div>
<script>(function(){var w=window.innerWidth||5088,z=w/1272,a=document.getElementById("app");if(z>0&&Math.abs(z-4)>0.001){a.style.zoom=z;document.body.style.width=(1272*z)+"px";document.body.style.height=(1094*z)+"px";}})();</script>
</body></html>
